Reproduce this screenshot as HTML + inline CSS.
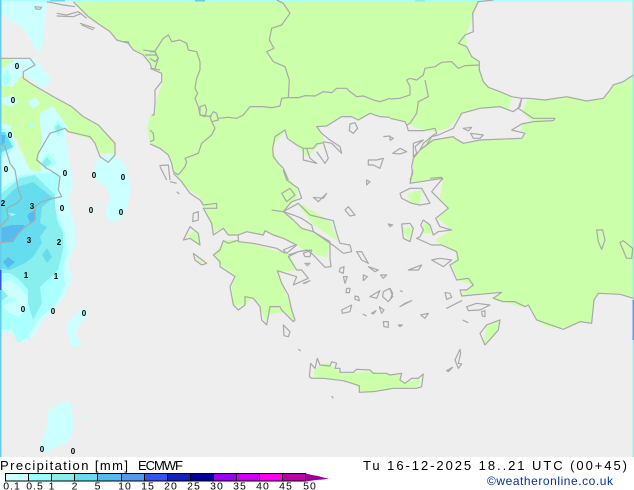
<!DOCTYPE html>
<html><head><meta charset="utf-8"><style>
html,body{margin:0;padding:0;background:#fff;width:634px;height:490px;overflow:hidden}
svg{display:block}
.c{fill:none;stroke:#a8a8a8;stroke-width:3.6;stroke-linejoin:round}
.n{font:bold 8px "Liberation Sans",sans-serif;fill:#000;text-anchor:middle}
.l{font:10.5px "Liberation Sans",sans-serif;fill:#000;text-anchor:middle;letter-spacing:1px}
</style></head><body>
<svg width="634" height="490" viewBox="0 0 634 490" xmlns="http://www.w3.org/2000/svg">
<rect width="634" height="457" fill="#eeeeee"/>
<g fill="#ccffaa">
<polygon points="73,0 80,8 88,17 100,25 110,32 117,40 128,43 133,50 143,55 150,63 152,68 162,72 163,80 157,98 155,113 150,116 147,130 150,143 168,155 173,170 178,177 182,185 200,197 203,207 210,220 213,233 223,228 228,235 238,235 247,232 263,235 265,232 273,235 283,238 297,245 303,250 327,258 330,242 313,232 302,228 293,220 283,213 285,208 297,200 298,190 283,170 278,163 273,150 275,143 285,132 287,137 297,145 298,148 307,157 317,147 323,143 327,155 322,133 317,127 327,125 342,117 352,117 358,120 370,113 383,117 390,118 405,122 417,128 435,132 448,128 462,113 480,108 500,107 508,110 512,97 500,92 488,87 483,82 479,70 479,62 472,57 467,47 466,35 472,20 478,2 478,0"/>
<polygon points="528,98 545,100 567,97 587,101 603,98 610,90 613,85 623,82 634,75 634,297 630,297 620,294 598,293 594,300 592,323 580,322 563,328 547,327 537,320 528,305 520,307 507,302 500,302 490,298 502,292 460,295 472,285 458,280 452,265 458,253 442,245 435,240 452,230 437,218 448,208 440,198 443,178 410,183 413,170 413,160 420,150 428,140 453,137 463,143 480,140 522,138 527,135 520,132 523,124 533,122 525,115 522,112"/>
<polygon points="213,255 225,240 238,240 285,253 290,255 297,270 278,272 282,283 292,310 295,322 285,312 270,314 266,322 260,307 253,297 245,305 233,305 232,287 235,277 220,265"/>
<polygon points="0,58 15,60 22,75 33,85 53,97 72,107 83,117 100,127 115,143 113,153 100,153 93,140 83,137 67,132 50,133 38,155 42,172 30,170 17,140 0,123"/>
<g transform="translate(170 170) scale(.3333)">
<polygon points="385,105 400,105 480,155 505,215 430,165"/>
<polygon points="340,70 360,58 372,75 350,95"/>
<polygon points="50,195 80,180 90,225"/>
<polygon points="75,255 105,275 90,280"/>
</g>
<g transform="translate(390 170) scale(.3333)">
<polygon points="50,70 95,60 90,105 65,100"/>
<polygon points="35,175 70,170 55,210"/>
<polygon points="100,160 115,155 125,190 95,190"/>
<polygon points="330,450 290,470 280,525 315,500"/>
<polygon points="170,415 220,392 190,405"/>
</g>
<g transform="translate(290 340) scale(.3333)">
<polygon points="75,85 110,68 135,85 155,100 240,95 330,105 330,120 345,130 390,115 385,140 310,145 250,155 215,155 190,130 160,120 70,112"/>
</g>
</g>
<!-- precipitation -->
<g fill="#ccffff">
<polygon points="0,0 47,0 47,5 43,30 43,45 38,53 25,30 0,13"/>
<polygon points="15,60 33,58 52,80 42,88 22,72"/>
<polygon points="0,70 15,60 22,75 12,87 0,85"/>
<polygon points="0,98 13,95 18,102 10,107 2,103"/>
<polygon points="28,102 35,97 40,103 33,109"/>
<polygon points="40,113 53,106 68,128 65,133 72,180 73,183 68,200 75,227 75,247 68,263 72,277 65,297 43,320 33,337 23,343 13,333 0,333 0,123 10,125 17,147 30,170 42,172 38,155 42,140 40,125"/>
<polygon points="93,170 100,158 113,153 123,163 127,170 131,190 125,213 117,222 108,220 105,210 110,197 107,187 95,180"/>
<polygon points="83,307 88,312 75,333 82,345 70,347 67,323"/>
<polygon points="63,401 70,401 73,420 73,430 68,442 45,452 38,450 48,425 47,412"/>
<polygon points="83,415 88,417 85,419"/>
<polygon points="90,205 93,208 92,215 89,212"/>
</g>
<g fill="#aaffff">
<polygon points="0,128 8,130 15,145 8,155 0,157"/>
<polygon points="0,190 20,175 57,172 60,180 55,200 53,205 60,220 65,233 67,253 63,267 65,285 55,305 38,320 27,337 18,343 12,330 30,300 20,287 10,280 0,283"/>
<polygon points="7,70 12,78 5,87 2,78"/>
<polygon points="58,120 65,128 58,137 53,128"/>
<polygon points="47,153 57,163 45,170 40,163"/>
<polygon points="30,123 35,125 30,128"/>
<polygon points="0,300 13,297 17,300 5,305 0,310"/>
<polygon points="0,305 8,312 25,320 30,340 22,335 12,328 0,330"/>
</g>
<g fill="#88eeee">
<polygon points="0,195 20,178 35,175 55,195 55,205 57,220 63,233 63,250 58,270 40,287 42,303 33,320 28,303 28,290 20,280 10,273 0,273"/>
<polygon points="0,287 8,296 0,302"/>
<polygon points="47,157 52,163 45,167 42,163"/>
<polygon points="58,124 62,128 58,133 55,128"/>
</g>
<g fill="#66ddee">
<polygon points="0,203 17,187 33,182 53,198 42,207 40,223 47,227 40,237 42,243 33,257 25,263 10,270 0,268"/>
<polygon points="47,248 52,257 47,263 42,255"/>
<polygon points="0,132 5,132 13,147 7,150 0,153"/>
</g>
<g fill="#55bbee">
<polygon points="0,228 12,225 25,225 13,242 0,243"/>
<polygon points="27,215 35,210 35,220 30,223"/>
<polygon points="8,257 15,262 8,268 3,262"/>
<polygon points="0,135 5,135 5,143 0,145"/>
</g>
<polygon points="8,213 16,214 12,216" fill="#aaffee"/>
<rect x="0" y="0" width="634" height="1.5" fill="#aaffff"/>
<rect x="50" y="0" width="15" height="1.5" fill="#66ddee"/><rect x="195" y="0" width="10" height="1.5" fill="#66ccee"/><rect x="415" y="0" width="10" height="1.5" fill="#88eeee"/>
<rect x="0" y="0" width="1.5" height="457" fill="#66ccee"/>
<rect x="0" y="270" width="1.5" height="20" fill="#3355ee"/>
<rect x="632.5" y="0" width="1.5" height="457" fill="#99eeee"/>
<rect x="632.5" y="300" width="1.5" height="40" fill="#5599ee"/>
<!-- coastlines -->
<g transform="scale(.3333)">
<g class="c">
<path d="M220,5 240,25 265,50 300,75 330,95 350,120 385,130 400,150 430,165 450,190 455,205 480,210"/>
<path d="M430,150 465,155 475,175 465,205M435,165 470,165"/>
<path d="M140,5 165,10 190,15 225,20M105,20 125,22 120,28 108,27ZM170,40 200,45 235,35 260,55M170,48 220,50 245,40M240,70 285,85M245,75 280,90M370,125 385,125 388,135"/>
<path d="M0,175 90,175 105,195 70,215 70,235 100,255 160,290 215,320 250,350 295,375 345,430 345,465 325,487 300,470 285,430 270,410 205,395 195,385 150,400 115,460 110,480 140,505 150,510 180,530 175,570 185,590 160,595 125,605 105,620 105,660 70,685 30,725 0,728"/>
<path d="M0,430 15,440 30,490 45,510 55,570 65,595 50,610 20,625 25,655 0,680"/>
</g>
</g>
<g transform="translate(150 0) scale(.3333)"><g class="c">
<path d="M0,155 15,155 25,175 15,185 0,175"/>
<path d="M0,205 35,220 35,245 15,270 15,310 12,345 5,345M0,390 10,400 12,420 0,425M0,432 30,445 55,465 65,490 70,515 85,525"/>
<path d="M85,525 105,500 110,485 105,475 145,460 155,430 185,405 195,385 185,365"/>
<path d="M180,350 190,335 200,340 205,360 185,365ZM150,320 165,315 170,330 165,350 150,345Z"/>
<path d="M0,155 15,153 40,115 55,105 65,125 90,120 110,130 115,150 140,155 150,185 150,210 140,235 135,265 143,280 135,295 145,320 150,345 185,350"/>
<path d="M205,355 235,352 260,355 280,345 300,320 340,320 365,323 390,318 395,295 415,293 445,293 465,287 495,288 520,275 545,278 560,265 590,265 600,275 620,290 640,288 670,300 690,305 720,295"/>
<path d="M415,293 418,240 405,200 370,185 350,155 372,145 358,120 365,85 395,75 420,40 400,10 380,0"/>
<path d="M415,540 400,505 385,490 370,470 368,445 375,410 405,390 412,415 440,435 460,445 490,445 500,432 520,428 535,475 525,490 500,455"/>
<path d="M460,445 460,480 500,490 480,475 470,445M520,425 545,430 575,460 570,440 540,420 515,400 500,380 530,378 575,350 605,350 625,360 660,340 690,350 720,352"/>
<path d="M600,372 615,368 623,385 610,400 598,392ZM700,410 720,408 720,420M655,480 680,480 700,475 690,505 670,495 655,495Z"/>
<path d="M28,497 55,495 60,540M30,500 50,540"/>
</g></g>
<g transform="translate(390 0) scale(.3333)"><g class="c">
<path d="M0,355 45,365 50,375 55,392 100,392 135,385 140,400 130,405 100,430 90,450 70,475 65,500 68,520 60,540"/>
<path d="M90,450 110,435 125,410 145,405 190,385 215,340 270,325 330,320 355,330 370,335 390,320 395,295 365,290 330,275 295,262 280,245 268,210 268,185 245,170 230,140 205,130 225,105 250,95 248,40 265,5 310,0"/>
<path d="M268,195 225,197 205,205 185,185 155,187 135,200 105,205 100,225 80,240 60,235 50,240 60,260 60,285 30,295 0,297"/>
<path d="M105,240 115,290 85,305 80,340 60,370 50,375"/>
<path d="M395,295 415,295 465,300 530,290 590,303 640,295 660,270 670,255 700,245 730,225"/>
<path d="M395,295 385,325 430,355 470,355 495,355 490,362 430,365 395,372 365,390 405,400 395,415 270,420 220,430 195,415 190,410 130,420 90,450"/>
<path d="M220,385 245,382 235,393ZM242,400 280,405 270,415 250,415ZM8,460 30,445 50,455 30,462ZM70,430 100,420 75,440 80,460 70,470ZM0,410 10,415 0,422M120,535 155,532 158,540"/>
</g></g>
<g transform="translate(170 170) scale(.3333)"><g class="c">
<path d="M10,10 35,35 60,70 90,90 100,105 140,100 140,115 100,115 125,160 130,195 160,175 175,195 205,195 230,185 280,195 285,182 310,195 340,205 380,225 350,250 340,240 375,225"/>
<path d="M345,250 320,235 250,220 205,215 205,195M205,210 175,220 160,212 150,240 130,255 150,275 150,290 195,320 180,350 190,405 205,420 225,405 225,380 250,385 270,410 275,450 290,465 300,410 330,410 335,420 370,455 375,450 365,420 355,375 335,340 322,302 380,320 370,345 415,325 395,300 380,300 355,260 385,245 420,240"/>
<path d="M340,125 385,100 420,135 490,152 500,190 510,220 540,225 545,245 520,250 495,230 430,185 425,165 395,145 370,135Z"/>
<path d="M305,120 340,125 370,150 395,175 430,185 480,215 480,265 483,290 465,292 430,255 410,240 385,245 355,255"/>
<path d="M340,0 350,30 385,55 395,85 365,95 340,125M335,70 360,55 375,75 350,95Z"/>
<path d="M40,210 60,170 85,190 90,225 60,205ZM0,35 20,40M70,250 110,280 95,285 75,270ZM70,130 85,125 85,150 68,155ZM20,65 28,72M430,82 445,95 470,70 460,85ZM525,120 535,110 555,135 540,138ZM560,245 575,245 595,280 575,270ZM595,290 625,300 615,305ZM510,295 522,290 520,310 508,305ZM520,320 532,320 525,340ZM530,355 540,355 538,368 528,368ZM555,378 565,380 568,392 555,388ZM600,380 630,362 620,385ZM640,365 660,355 668,380 655,395 638,380ZM515,420 545,405 540,425 517,430ZM580,315 592,320 580,332ZM632,315 650,315 640,325ZM628,410 642,420 635,430ZM605,430 618,422 610,432ZM578,432 590,438M640,455 655,455 655,472 642,470ZM340,465 360,485 355,500 342,497ZM655,162 668,165 660,170ZM590,30 600,35 590,45ZM400,250 425,240 420,260 405,260ZM405,280 420,280 412,287ZM400,340 420,332 405,340Z"/>
</g></g>
<g transform="translate(390 170) scale(.3333)"><g class="c">
<path d="M68,0 60,40 158,25 125,65 145,85 175,115 137,145 150,170 185,180 145,185 130,195 120,165 100,150 92,165 100,180 90,200 80,205 125,225 155,225 200,245 205,270 180,285 200,330 235,325 250,345 230,360 210,360 215,378 335,367 310,385 340,395 375,395 405,410 415,405 440,450 520,478 570,455 605,460 612,390 625,370 690,373 730,385"/>
<path d="M30,70 60,55 95,55 120,100 90,105 65,100 35,85ZM35,162 60,160 70,175 60,215 40,205ZM125,270 150,265 185,270 160,290ZM55,300 95,285 85,300ZM170,415 215,392 190,405ZM330,450 325,480 285,525 270,490 290,465ZM620,180 638,180 645,210 635,238 625,215ZM690,218 700,212 728,235 725,265 710,265ZM230,410 260,400 300,405 270,420 235,422ZM165,368 180,370 185,382 170,388ZM275,425 285,422 285,440 277,438ZM92,435 115,430 105,445ZM25,465 37,465 30,470ZM218,450 235,458M30,410 65,392 45,400ZM0,355 8,370 0,390M30,362 38,365"/>
</g></g>
<g transform="translate(290 340) scale(.3333)"><g class="c">
<path d="M58,110 62,70 75,85 82,55 90,75 120,78 125,65 140,70 135,85 150,85 150,97 190,97 200,88 240,90 250,100 290,100 300,105 335,100 330,120 345,130 365,115 385,115 400,102 395,140 380,145 310,145 280,150 250,155 208,157 208,137 160,122 100,115 65,115Z"/>
<path d="M510,28 495,60 505,85 515,72 505,70 512,40ZM470,92 488,82 475,95ZM25,27 32,33M125,168 130,175"/>
</g></g>
<!-- point labels -->
<g class="n">
<text x="17" y="69">0</text><text x="13" y="103">0</text><text x="10" y="138">0</text><text x="6" y="172">0</text>
<text x="65" y="176">0</text><text x="94" y="178">0</text><text x="123" y="180">0</text>
<text x="62" y="211">0</text><text x="91" y="213">0</text><text x="121" y="215">0</text>
<text x="23" y="312">0</text><text x="53" y="314">0</text><text x="84" y="316">0</text>
<text x="42" y="452">0</text><text x="73" y="454">0</text>
<text x="3" y="206">2</text><text x="32" y="209">3</text><text x="29" y="243">3</text><text x="59" y="245">2</text><text x="26" y="278">1</text><text x="56" y="279">1</text>
</g>
<!-- bottom -->
<rect y="457" width="634" height="33" fill="#fff"/>
<text x="0" y="470" font-family="Liberation Sans, sans-serif" font-size="13" textLength="128" lengthAdjust="spacing">Precipitation [mm]</text>
<text x="138" y="470" font-family="Liberation Sans, sans-serif" font-size="13" textLength="45" lengthAdjust="spacing">ECMWF</text>
<g>
<rect x="6" y="473.5" width="22.5" height="7.5" fill="#ccffff"/>
<rect x="28.5" y="473.5" width="23" height="7.5" fill="#99ffff"/>
<rect x="51.5" y="473.5" width="23" height="7.5" fill="#88eeee"/>
<rect x="74.5" y="473.5" width="23" height="7.5" fill="#66ddee"/>
<rect x="97.5" y="473.5" width="24" height="7.5" fill="#55bbee"/>
<rect x="121.5" y="473.5" width="23" height="7.5" fill="#5599ee"/>
<rect x="144.5" y="473.5" width="23" height="7.5" fill="#3355ee"/>
<rect x="167.5" y="473.5" width="23" height="7.5" fill="#1122bb"/>
<rect x="190.5" y="473.5" width="23" height="7.5" fill="#000099"/>
<rect x="213.5" y="473.5" width="23" height="7.5" fill="#9900ee"/>
<rect x="236.5" y="473.5" width="23" height="7.5" fill="#cc00ee"/>
<rect x="259.5" y="473.5" width="23" height="7.5" fill="#ff00ee"/>
<rect x="282.5" y="473.5" width="23" height="7.5" fill="#bb00aa"/>
<polygon points="306,473.5 312,475 318,476 323,477.5 329,478.5 323,479.5 316,480 306,481.5" fill="#990099"/>
<path d="M5.5,473.5H305.5V481H5.5ZM28.5,473.5V481M51.5,473.5V481M74.5,473.5V481M97.5,473.5V481M121.5,473.5V481M144.5,473.5V481M167.5,473.5V481M190.5,473.5V481M213.5,473.5V481M236.5,473.5V481M259.5,473.5V481M282.5,473.5V481" fill="none" stroke="#000" stroke-width="1"/>
</g>
<g class="l">
<text x="12" y="489.5">0.1</text><text x="35" y="489.5">0.5</text><text x="52" y="489.5">1</text><text x="75" y="489.5">2</text><text x="98" y="489.5">5</text><text x="125" y="489.5">10</text><text x="148" y="489.5">15</text><text x="171" y="489.5">20</text><text x="194" y="489.5">25</text><text x="217" y="489.5">30</text><text x="240" y="489.5">35</text><text x="263" y="489.5">40</text><text x="286" y="489.5">45</text><text x="310" y="489.5">50</text>
</g>
<text x="363" y="470" font-family="Liberation Sans, sans-serif" font-size="13" textLength="264" lengthAdjust="spacing">Tu 16-12-2025 18..21 UTC (00+45)</text>
<text x="487" y="485" font-family="Liberation Sans, sans-serif" font-size="12" fill="#003399" textLength="126" lengthAdjust="spacing">©weatheronline.co.uk</text>
</svg>
</body></html>
